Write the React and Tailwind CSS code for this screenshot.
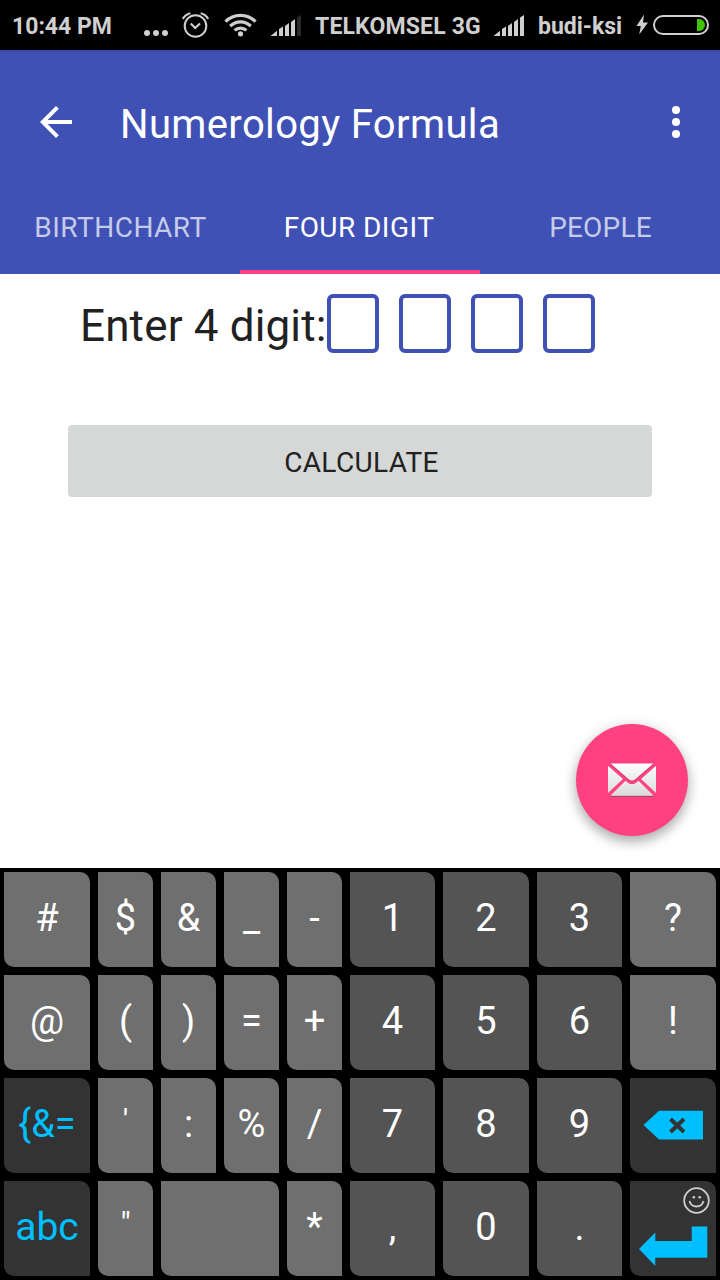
import React from "react";

const LIGHT = "bg-[#6f6f6f] text-white";
const DIGIT = "bg-[#545454] text-white";
const DARK = "bg-[#333333] text-[#00bfff]";

const rows = [
  [["#", LIGHT], ["$", LIGHT], ["&", LIGHT], ["_", LIGHT], ["-", LIGHT], ["1", DIGIT], ["2", DIGIT], ["3", DIGIT], ["?", LIGHT]],
  [["@", LIGHT], ["(", LIGHT], [")", LIGHT], ["=", LIGHT], ["+", LIGHT], ["4", DIGIT], ["5", DIGIT], ["6", DIGIT], ["!", LIGHT]],
  [["{&=", DARK], ["'", LIGHT], [":", LIGHT], ["%", LIGHT], ["/", LIGHT], ["7", DIGIT], ["8", DIGIT], ["9", DIGIT], ["backspace", DARK]],
  [["abc", DARK], ['"', LIGHT], ["space", LIGHT], ["*", LIGHT], [",", DIGIT], ["0", DIGIT], [".", DIGIT], ["enter", DARK]],
];

const keyText = {
  abc: "text-[39px] leading-[92px]",
  "'": "text-[32px] leading-[84px]",
  '"': "text-[32px] leading-[84px]",
};

function Signal({ full }) {
  return (
    <svg width="32" height="22" viewBox="0 0 32 22" fill="#cfcfcf" className="shrink-0">
      <path d="M0.5 21 L7 15.8 V21 Z" />
      <path d="M9 14 L13 11.5 V21 H9 Z" />
      <path d="M15 11 L19 8 V21 H15 Z" />
      <path d="M21 7 L25 4 V21 H21 Z" />
      <path d="M27 2.5 L31 0 V21 H27 Z" fill={full ? "#cfcfcf" : "#2b2b2b"} />
    </svg>
  );
}

function StatusBar() {
  return (
    <div className="flex h-[50px] w-full items-center bg-black text-[23px] leading-[50px] font-bold whitespace-nowrap text-[#cfcfcf]">
      <span className="ml-3 w-[131px] pt-[3px]">10:44 PM</span>
      <svg width="26" height="6" viewBox="0 0 26 6" fill="#cfcfcf" className="mt-4 ml-px shrink-0">
        <circle cx="3" cy="3" r="3" />
        <circle cx="12" cy="3" r="3" />
        <circle cx="21" cy="3" r="3" />
      </svg>
      <svg width="28" height="28" viewBox="0 0 28 28" fill="none" stroke="#cfcfcf" strokeWidth="2" className="mb-px ml-[12px] shrink-0">
        <circle cx="13.5" cy="15" r="10.8" />
        <path d="M8.8 12.5 L13.2 17 L18 12.5" strokeWidth="2.2" />
        <path d="M0.8 8 Q3 3.5 8.3 2.2" />
        <path d="M26.2 8 Q24 3.5 18.7 2.2" />
      </svg>
      <svg width="34" height="26" viewBox="0 0 34 26" fill="none" stroke="#cfcfcf" strokeWidth="3.2" className="mb-[2px] ml-[14px] shrink-0">
        <path d="M1.5 10.6 A21 21 0 0 1 31.5 10.6" />
        <path d="M6.2 15.2 A14.6 14.6 0 0 1 26.8 15.2" />
        <path d="M10.6 19.4 A8.6 8.6 0 0 1 22.4 19.4" />
        <circle cx="16.5" cy="22.8" r="2.6" fill="#cfcfcf" stroke="none" />
      </svg>
      <div className="mt-[2px] ml-[12px] flex w-[45px]"><Signal /></div>
      <span className="w-[178px] pt-[3px] tracking-[0.15px]">TELKOMSEL 3G</span>
      <div className="mt-[2px] flex w-[45px]"><Signal full /></div>
      <span className="w-[98px] pt-[3px]">budi-ksi</span>
      <svg width="74" height="22" viewBox="0 0 74 22" className="shrink-0">
        <path d="M8 0.5 L0.5 12 H4.8 L3.2 20.5 L12 8.5 H7 Z" fill="#cfcfcf" />
        <rect x="18" y="2" width="54" height="18" rx="9" fill="none" stroke="#cfcfcf" strokeWidth="2" />
        <path d="M61 5 H63 A6 6 0 0 1 63 17 H61 Z" fill="#43c400" />
      </svg>
    </div>
  );
}

function Header() {
  return (
    <header className="flex h-[224px] w-full flex-col bg-[#3f51b5] text-white">
      <div className="h-1 bg-linear-to-b from-[#3748a2] to-[#3f51b5]" />
      <div className="mt-3 flex h-28 items-center">
        <svg width="32" height="32" viewBox="4 4 16 16" fill="white" className="ml-10 shrink-0">
          <path d="M20 11H7.83l5.59-5.59L12 4l-8 8 8 8 1.41-1.41L7.83 13H20v-2z" />
        </svg>
        <h1 className="mt-[5px] ml-12 flex-1 text-[40px] leading-none font-normal tracking-[0.37px]">Numerology Formula</h1>
        <svg width="8" height="32" viewBox="8 0 8 32" fill="white" className="mr-10 shrink-0 overflow-visible">
          <circle cx="12" cy="4" r="4" />
          <circle cx="12" cy="16" r="4" />
          <circle cx="12" cy="28" r="4" />
        </svg>
      </div>
      <nav className="grid h-24 grid-cols-3 text-center text-[28px] leading-[93px]">
        <div className="h-24 pt-[3px] pl-px tracking-[0.5px] text-[#c5cbe9]">BIRTHCHART</div>
        <div className="h-24 overflow-hidden border-b-4 border-[#ff4081] pt-[3px] pr-[2px] tracking-[0.45px]">FOUR DIGIT</div>
        <div className="h-24 pt-[3px] pl-px tracking-[0.2px] text-[#c5cbe9]">PEOPLE</div>
      </nav>
    </header>
  );
}

function KeyContent({ label }) {
  if (label === "space") return null;
  if (label === "backspace")
    return (
      <svg width="86" height="95" viewBox="0 0 86 95">
        <path d="M13.5 47 L29 32.7 H73 V61.5 H29 Z" fill="#00bfff" />
        <path d="M40.5 41 L54 54 M54 41 L40.5 54" stroke="#333333" strokeWidth="4" />
      </svg>
    );
  if (label === "enter")
    return (
      <svg width="86" height="95" viewBox="0 0 86 95" fill="none">
        <circle cx="66.5" cy="19.5" r="12.3" stroke="#cfcfcf" strokeWidth="1.8" />
        <circle cx="63.8" cy="16.2" r="1.3" fill="#cfcfcf" />
        <circle cx="69.7" cy="16.2" r="1.3" fill="#cfcfcf" />
        <path d="M59.5 20 Q61 25.5 66.5 25.5 Q72 25.5 73.5 20" stroke="#cfcfcf" strokeWidth="1.8" />
        <path d="M9 68 L25.3 51.5 V60 H61.7 V45.5 H77.3 V76.7 H25.3 V85 Z" fill="#00bfff" />
      </svg>
    );
  return <span>{label}</span>;
}

function Keyboard() {
  return (
    <div className="flex h-[412px] w-full flex-col gap-2 bg-black p-1">
      {rows.map((row, i) => (
        <div key={i} className="grid h-[95px] grid-cols-[86px_55px_55px_55px_55px_85px_86px_85px_86px] gap-x-2">
          {row.map(([label, tone]) => (
            <div
              key={label}
              className={`flex justify-center overflow-hidden rounded-tr-[10px] rounded-bl-[10px] ${tone} ${label === "space" ? "col-span-2" : ""} ${keyText[label] || "text-[38px] leading-[92px]"}`}
            >
              <KeyContent label={label} />
            </div>
          ))}
        </div>
      ))}
    </div>
  );
}

export default function App() {
  return (
    <div className="flex h-[1280px] w-[720px] flex-col overflow-hidden bg-white font-[Roboto,sans-serif]">
      <StatusBar />
      <Header />
      <main className="flex h-[594px] flex-col pt-5">
        <div className="flex h-[59px]">
          <label className="ml-20 w-[247px] text-[44px] leading-[64px] tracking-[0.15px] whitespace-nowrap text-[#212121]">Enter 4 digit:</label>
          <div className="flex gap-5">
            {[0, 1, 2, 3].map((n) => (
              <div key={n} className="h-[59px] w-[52px] rounded-[6px] border-4 border-[#3f51b5]" />
            ))}
          </div>
        </div>
        <button className="mx-[68px] mt-[72px] h-[72px] rounded-[4px] bg-[#d6d7d7] pt-[3px] pl-[3px] text-[28px] leading-[69px] tracking-[0.35px] text-[#212121]">
          CALCULATE
        </button>
        <div className="mt-auto mr-8 mb-8 flex h-28 w-28 items-center justify-center self-end rounded-full bg-[#ff4081] shadow-[0_6px_12px_rgba(0,0,0,0.26),0_2px_16px_rgba(0,0,0,0.12)]">
          <svg width="50" height="36" viewBox="0 0 50 36" className="shrink-0">
            <defs>
              <linearGradient id="paper" x1="0" y1="0" x2="0" y2="36" gradientUnits="userSpaceOnUse">
                <stop offset="0" stopColor="#ffffff" />
                <stop offset="1" stopColor="#d8d8d8" />
              </linearGradient>
            </defs>
            <path d="M3 34.3 H47" stroke="#a34a69" strokeWidth="1.2" />
            <g fill="url(#paper)">
              <path d="M3.5 1.5 H46.5 L28.5 17 Q25 20.5 21.5 17 Z" />
              <path d="M1 3.8 L16 17 L1 31 Z" />
              <path d="M49 3.8 L34 17 L49 31 Z" />
              <path d="M3.3 33.8 L18.5 18.8 L20.3 20.2 Q25 24.5 29.7 20.2 L31.5 18.8 L46.7 33.8 Z" />
            </g>
            <path d="M3.5 2 L21 17.5 Q25 20.8 29 17.5 L46.5 2" fill="none" stroke="#8c4b62" strokeOpacity="0.55" strokeWidth="0.9" />
          </svg>
        </div>
      </main>
      <Keyboard />
    </div>
  );
}
